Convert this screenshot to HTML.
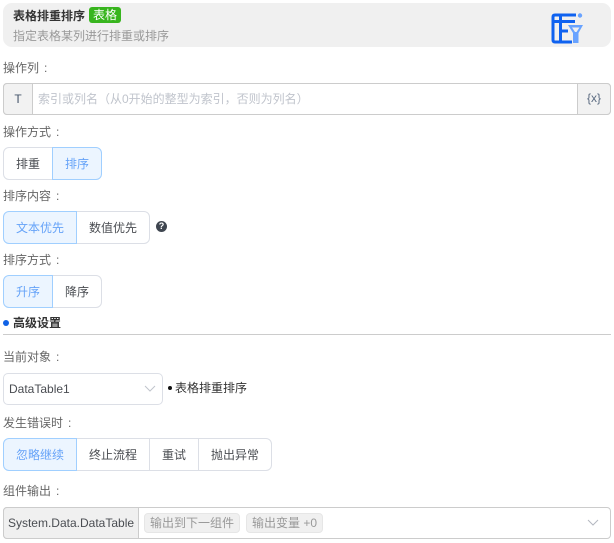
<!DOCTYPE html>
<html lang="zh"><head><meta charset="utf-8"><style>
html,body{margin:0;padding:0;background:#fff}
body{width:614px;height:543px;position:relative;overflow:hidden;font:12px/16px "Liberation Sans","Noto Sans CJK SC",sans-serif;color:#303133}
div,span{position:absolute;box-sizing:border-box;white-space:nowrap}
b{font-weight:normal;font-family:"Liberation Sans",sans-serif;margin-left:5px}
.l{left:3px;color:#666;height:16px}
.b{height:33px;border:1px solid #dcdfe6;background:#fff;text-align:center;line-height:32px;color:#4a4d52}
.a{background:#ecf5ff;border-color:#a0cfff;color:#66a3f8;z-index:1}
.t{height:20px;top:513px;background:#f0f0f0;border:1px solid #e6e6e6;border-radius:4px;color:#999;line-height:19px;text-align:center}
</style></head><body>
<div style="left:3px;top:3px;width:608px;height:44px;background:#f0f0f0;border-radius:9px"></div>
<div style="left:13px;top:8px;font-weight:bold;color:#333">表格排重排序</div>
<div style="left:89px;top:7px;width:32px;height:16px;background:#38b51e;border-radius:3px;color:#fff;text-align:center">表格</div>
<div style="left:13px;top:28px;color:#999">指定表格某列进行排重或排序</div>
<svg style="position:absolute;left:550px;top:12px" width="34" height="34" viewBox="0 0 34 34" fill="none">
<path d="M26 3H5Q3 3 3 5V28Q3 30 5 30H22M3 9.500H25M10.500 3V30M10.500 19H18" stroke="#0f62f0" stroke-width="3"/>
<circle cx="30" cy="3.500" r="2.200" fill="#69a3ff"/>
<path d="M18 13H33L28.500 21V31H23V21Z M22 15.500L25 20H26.500L29.500 15.500Z" fill="#69a3ff" fill-rule="evenodd"/>
</svg>

<div class="l" style="top:60px">操作列<b>:</b></div>
<div style="left:3px;top:83px;width:608px;height:32px;border:1px solid #ccc;border-radius:4px;background:#fff"></div>
<div style="left:3px;top:83px;width:30px;height:32px;border:1px solid #ccc;border-radius:4px 0 0 4px;background:#f2f2f2;text-align:center;line-height:30px;color:#44546a">T</div>
<div style="left:38px;top:91px;color:#c0c4cc">索引或列名（从0开始的整型为索引，否则为列名）</div>
<div style="left:577px;top:83px;width:34px;height:32px;border:1px solid #ccc;border-radius:0 4px 4px 0;background:#f2f2f2;text-align:center;line-height:29px;color:#5a6a80">{x}</div>

<div class="l" style="top:124px">操作方式<b>:</b></div>
<div class="b" style="left:3px;top:147px;width:50px;border-radius:6px 0 0 6px">排重</div>
<div class="b a" style="left:52px;top:147px;width:50px;border-radius:0 6px 6px 0">排序</div>

<div class="l" style="top:188px">排序内容<b>:</b></div>
<div class="b a" style="left:3px;top:211px;width:74px;border-radius:6px 0 0 6px">文本优先</div>
<div class="b" style="left:76px;top:211px;width:74px;border-radius:0 6px 6px 0">数值优先</div>
<div style="left:156px;top:221px;width:11px;height:11px;border-radius:50%;background:#3f4650;color:#fff;font:bold 9px/11px 'Liberation Sans',sans-serif;text-align:center">?</div>

<div class="l" style="top:252px">排序方式<b>:</b></div>
<div class="b a" style="left:3px;top:275px;width:50px;border-radius:6px 0 0 6px">升序</div>
<div class="b" style="left:52px;top:275px;width:50px;border-radius:0 6px 6px 0">降序</div>

<div style="left:3px;top:320px;width:6px;height:6px;border-radius:50%;background:#0f62e6"></div>
<div style="left:13px;top:315px;font-weight:bold;color:#333">高级设置</div>
<div style="left:3px;top:334px;width:608px;height:1px;background:#ccc"></div>

<div class="l" style="top:349px">当前对象<b>:</b></div>
<div style="left:3px;top:373px;width:160px;height:32px;border:1px solid #dcdfe6;border-radius:5px;background:#fff;padding-left:5px;line-height:31px;color:#4a4d52">DataTable1</div>
<svg style="position:absolute;left:144px;top:385px" width="12" height="8" fill="none"><path d="M1 1L6 6L11 1" stroke="#c0c4cc"/></svg>
<div style="left:168px;top:386px;width:4px;height:4px;border-radius:50%;background:#111"></div>
<div style="left:175px;top:380px;color:#333">表格排重排序</div>

<div class="l" style="top:415px">发生错误时<b>:</b></div>
<div class="b a" style="left:3px;top:438px;width:74px;border-radius:6px 0 0 6px">忽略继续</div>
<div class="b" style="left:76px;top:438px;width:74px;border-radius:0">终止流程</div>
<div class="b" style="left:149px;top:438px;width:50px;border-radius:0">重试</div>
<div class="b" style="left:198px;top:438px;width:74px;border-radius:0 6px 6px 0">抛出异常</div>

<div class="l" style="top:483px">组件输出<b>:</b></div>
<div style="left:3px;top:507px;width:608px;height:32px;border:1px solid #ccc;border-radius:4px;background:#fff"></div>
<div style="left:3px;top:507px;width:136px;height:32px;border:1px solid #ccc;border-radius:4px 0 0 4px;background:#f0f0f0;text-align:center;line-height:31px;color:#4a4d52">System.Data.DataTable</div>
<div class="t" style="left:144px;width:96px">输出到下一组件</div>
<div class="t" style="left:246px;width:77px">输出变量 +0</div>
<svg style="position:absolute;left:587px;top:519px" width="12" height="8" fill="none"><path d="M1 1L6 6L11 1" stroke="#b4b8c0"/></svg>
</body></html>
